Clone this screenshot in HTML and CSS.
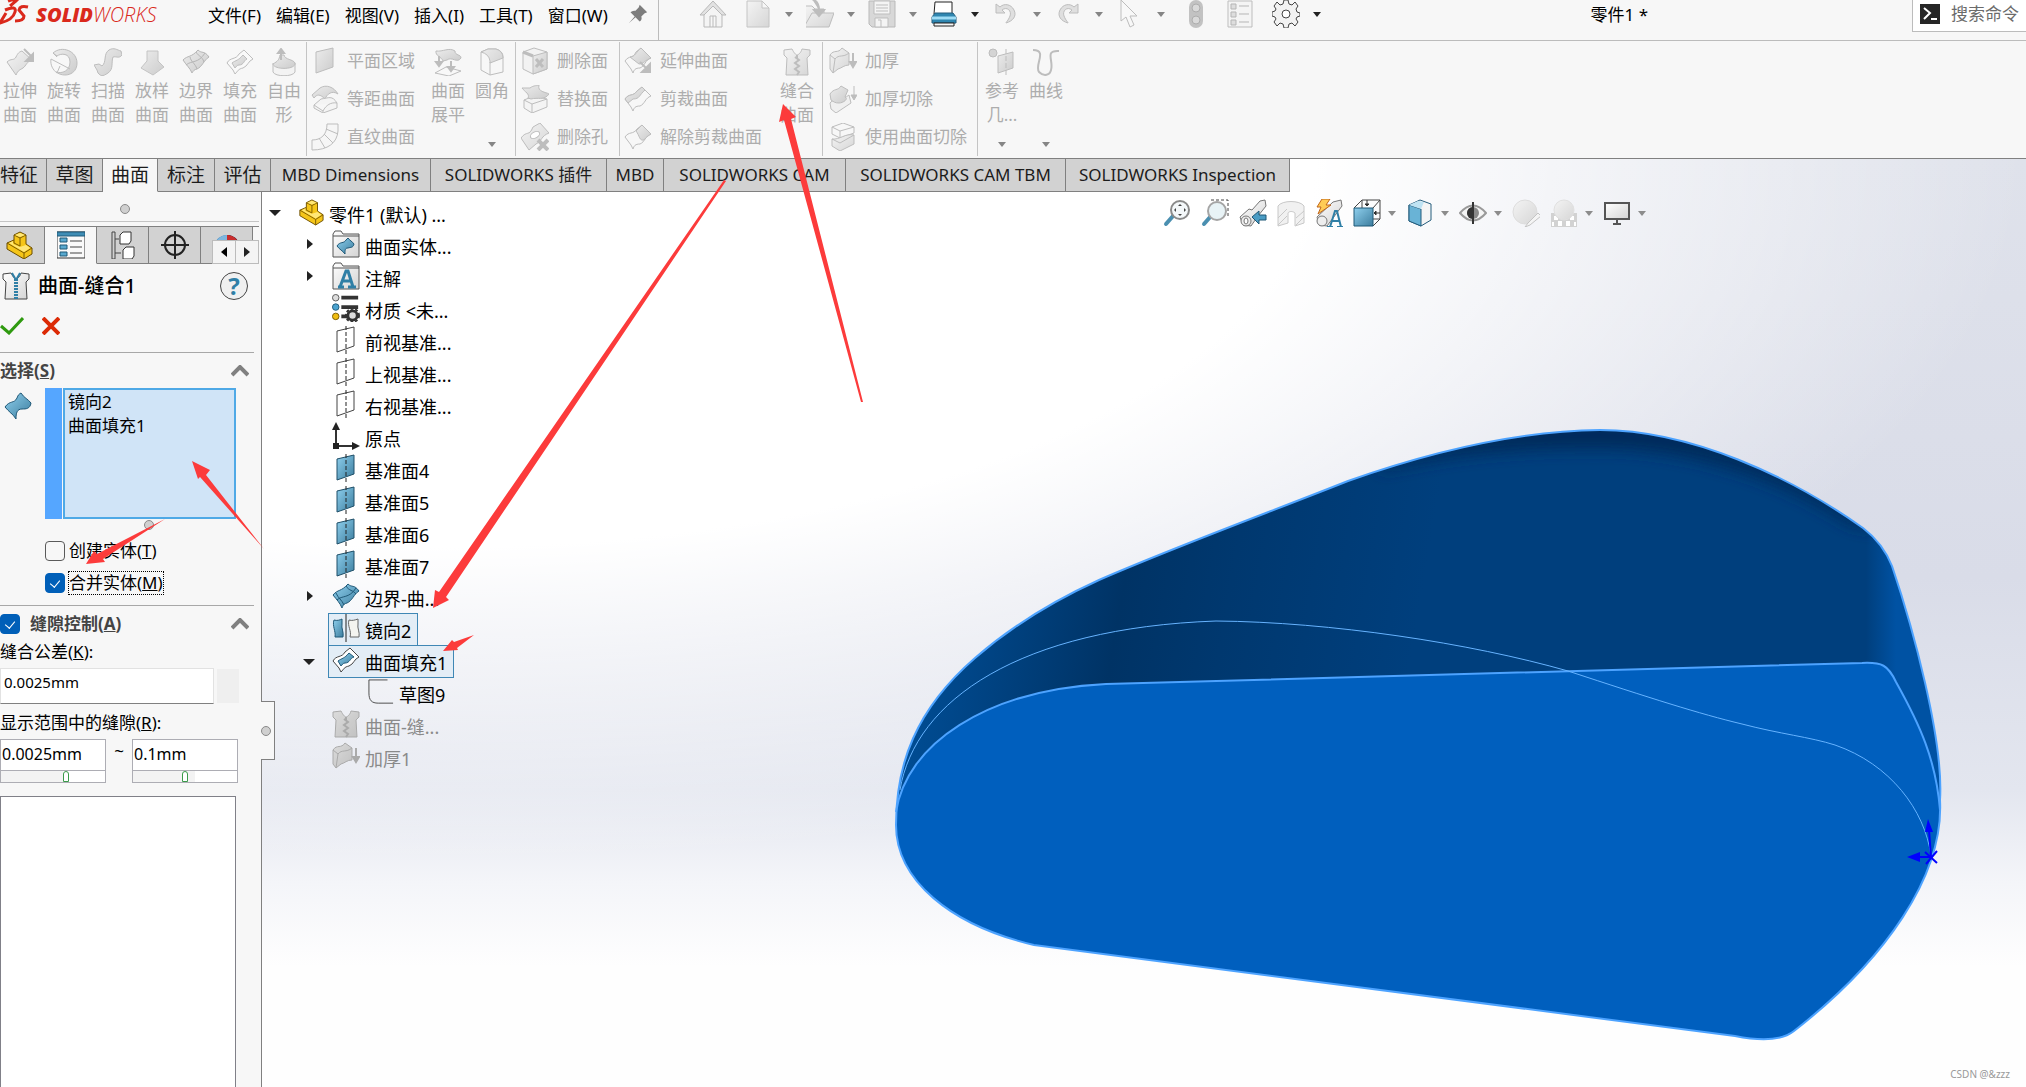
FILE: index.html
```html
<!DOCTYPE html>
<html lang="zh-CN">
<head>
<meta charset="utf-8">
<meta name="viewport" content="width=device-width, initial-scale=1">
<title>零件1 - SOLIDWORKS</title>
<link rel="stylesheet" href="styles.css">
</head>
<body>
<svg class="defs" aria-hidden="true">
  <defs>
    <linearGradient id="gg" x1="0" y1="0" x2="1" y2="1"><stop offset="0" stop-color="#f4f4f4"/><stop offset="1" stop-color="#d6d6d6"/></linearGradient>
    <linearGradient id="gd" x1="0" y1="0" x2="1" y2="1"><stop offset="0" stop-color="#ececec"/><stop offset="1" stop-color="#cccccc"/></linearGradient>
    <linearGradient id="gb" x1="0" y1="0" x2="1" y2="1"><stop offset="0" stop-color="#8fd0ee"/><stop offset="1" stop-color="#3c7d9e"/></linearGradient>
    <linearGradient id="gw" x1="0" y1="0" x2="1" y2="1"><stop offset="0" stop-color="#ffffff"/><stop offset="1" stop-color="#d4d4d4"/></linearGradient>

    <symbol id="extrude" viewBox="0 0 28 28"><path d="M1 14C5 10 8 13 10 9S13 4 16 3L26 12C21 13 20 18 17 20S12 22 10 27Z" fill="url(#gg)" stroke="#bdbdbd"/><path d="M18 1L25 8M28 5V13H20Z" stroke="#bdbdbd" stroke-width="2" fill="#bdbdbd"/></symbol>
    <symbol id="revolve" viewBox="0 0 28 28"><path d="M3 5C12-3 27 3 27 15S14 30 6 24C12 26 20 23 20 14S11 5 7 8Z" fill="url(#gd)" stroke="#bdbdbd"/><path d="M3 5L7 9M1 11L20 21M1 11C0 17 3 22 7 25L10 18" fill="none" stroke="#bdbdbd"/></symbol>
    <symbol id="sweep" viewBox="0 0 28 28"><path d="M0 17L5 16 8 18C13 14 9 6 15 2C20-1 23 2 27 3L28 7C25 11 22 8 19 9C17 14 20 21 14 25S7 28 4 25L3 22Z" fill="url(#gd)" stroke="#bdbdbd"/></symbol>
    <symbol id="loft" viewBox="0 0 28 28"><path d="M9 3H20L20 13 26 19 15 27 3 20 9 13Z" fill="url(#gd)" stroke="#c4c4c4"/></symbol>
    <symbol id="boundary" viewBox="0 0 28 28"><path d="M1 12C6 7 9 10 16 2C20 6 22 2 27 9C22 12 20 19 15 21C11 22 11 24 10 25C8 20 5 18 1 12Z" fill="url(#gd)" stroke="#b5b5b5"/><path d="M8 9C9 14 13 15 15 21M14 4C17 9 20 8 22 14M4 17C10 12 16 16 23 5" fill="none" stroke="#b5b5b5"/></symbol>
    <symbol id="fill" viewBox="0 0 28 28"><path d="M1 15C4 9 10 12 13 6L18 2 27 11C22 13 22 18 17 20C12 21 12 23 9 26L7 22Z" fill="#f9f9f9" stroke="#bdbdbd"/><path d="M6 15C10 12 12 13 17 7L21 11C18 12 18 17 13 17C11 17 10 19 9 20Z" fill="url(#gd)" stroke="#bdbdbd"/></symbol>
    <symbol id="freeform" viewBox="0 0 28 28"><path d="M3 15V24C5 29 23 29 25 24V15" fill="#f3f3f3" stroke="#bdbdbd"/><path d="M3 16C8 13 9 12 10 7H14C15 12 23 11 25 15C26 22 4 22 3 16Z" fill="url(#gd)" stroke="#bdbdbd"/><path d="M11 12V2M8 5L11 1 14 5Z" fill="#bdbdbd" stroke="#bdbdbd" stroke-width="2"/></symbol>
    <symbol id="planar" viewBox="0 0 28 28"><path d="M5 5L22 1V20L5 26Z" fill="url(#gd)" stroke="#bdbdbd"/></symbol>
    <symbol id="offset" viewBox="0 0 28 28"><path d="M1 10L9 3C15-1 23 2 27 9C21 5 16 9 14 14C9 9 6 9 3 13Z" fill="url(#gd)" stroke="#bdbdbd"/><path d="M3 20L10 14C18 13 21 10 26 18V23L12 28 3 23ZM3 20L12 26C15 20 20 17 26 18M12 26V28" fill="#f4f4f4" stroke="#bdbdbd"/></symbol>
    <symbol id="ruled" viewBox="0 0 28 28"><path d="M16 1H27V8C26 20 17 27 1 27V17C10 17 16 12 16 1ZM15 6L27 11M13 11L22 20M8 15L14 25" fill="#f6f6f6" stroke="#bdbdbd"/></symbol>
    <symbol id="flatten" viewBox="0 0 28 28"><path d="M2 3C9 4 15-1 21 3C21 8 27 6 27 10C23 16 18 8 13 12L9 13C8 9 1 8 2 3Z" fill="url(#gd)" stroke="#bdbdbd"/><path d="M1 25L12 19 27 23 15 28Z" fill="#f8f8f8" stroke="#bdbdbd"/><path d="M5 8V16M17 13V21M2 14H8L5 18ZM14 19H20L17 23Z" fill="#bdbdbd" stroke="#bdbdbd" stroke-width="2"/></symbol>
    <symbol id="fillet" viewBox="0 0 28 28"><path d="M3 4L10 1H18Q25 3 25 9V24L12 27 3 22Z" fill="#f7f7f7" stroke="#bdbdbd"/><path d="M3 4L10 1H18Q25 3 25 10L12 15V13Q11 6 3 4ZM12 14V27" fill="url(#gd)" stroke="#bdbdbd"/></symbol>
    <symbol id="delface" viewBox="0 0 28 28"><path d="M2 5L13 1 26 5V22L12 27 2 22Z" fill="#f2f2f2" stroke="#bdbdbd"/><path d="M12 9L26 5V22L12 27Z" fill="url(#gd)" stroke="#bdbdbd"/><path d="M2 5L12 9M15 12L22 20M22 12L15 20" stroke="#bdbdbd" stroke-width="3"/></symbol>
    <symbol id="replace" viewBox="0 0 28 28"><path d="M3 15L13 11 26 14V22L11 28 3 23ZM3 15L11 19V28M11 19L26 14" fill="#f4f4f4" stroke="#bdbdbd"/><path d="M1 3L9 3C13 0 16 1 18 0C16 7 25 7 28 9C23 16 17 12 10 14L7 13C9 9 4 7 1 3Z" fill="url(#gd)" stroke="#bdbdbd"/></symbol>
    <symbol id="delhole" viewBox="0 0 28 28"><path d="M0 15C6 7 8 14 12 4L19 0 28 10C20 13 21 18 15 21L8 27Z" fill="url(#gg)" stroke="#bdbdbd"/><ellipse cx="14" cy="12" rx="5" ry="3" fill="#fff" stroke="#bdbdbd" transform="rotate(-30 14 12)"/><path d="M17 17L27 27M27 17L17 27" stroke="#bdbdbd" stroke-width="4"/></symbol>
    <symbol id="extend" viewBox="0 0 28 28"><path d="M1 14C5 8 9 12 12 5L17 1 27 11C21 13 21 19 16 21C11 21 10 23 9 26L7 22Z" fill="#f7f7f7" stroke="#bdbdbd"/><path d="M6 10C11 10 12 5 17 1L27 11C21 13 20 17 15 17Z" fill="url(#gd)" stroke="#bdbdbd"/><path d="M16 15L23 22M26 17V25H18Z" fill="#bdbdbd" stroke="#bdbdbd" stroke-width="2"/></symbol>
    <symbol id="trim" viewBox="0 0 28 28"><path d="M1 14C5 8 9 12 13 6L18 2 27 11C21 13 21 19 16 21C11 21 10 23 9 26L7 22Z" fill="#f7f7f7" stroke="#bdbdbd"/><path d="M1 14C5 8 9 12 13 6L18 2 21 5C15 10 16 14 9 14L4 18Z" fill="url(#gd)" stroke="#bdbdbd"/></symbol>
    <symbol id="untrim" viewBox="0 0 28 28"><path d="M1 14C5 8 9 12 13 6L18 2 27 11C21 13 21 19 16 21C11 21 10 23 9 26L7 22Z" fill="#f7f7f7" stroke="#bdbdbd"/><path d="M12 8L18 2 27 11C24 13 22 14 20 17C15 18 16 13 12 8Z" fill="url(#gd)" stroke="#bdbdbd"/></symbol>
    <symbol id="knit" viewBox="0 0 28 28"><path d="M1 2L9 1C11 5 13 7 14 7S18 5 19 1L27 2V7L24 10 25 27H3L4 10 1 7Z" fill="url(#gg)" stroke="#bdbdbd"/><path d="M12 9L16 12 12 15 16 18 12 21 16 24 14 27M14 7V10" fill="none" stroke="#bdbdbd" stroke-width="2"/></symbol>
    <symbol id="thicken" viewBox="0 0 28 28"><path d="M1 8C5 2 9 7 13 1L20 6V18C15 18 13 21 9 22L4 26 1 22Z" fill="url(#gg)" stroke="#bdbdbd"/><path d="M1 8L6 12C10 7 14 11 20 6M6 12L4 26" fill="none" stroke="#bdbdbd"/><path d="M24 6V16M21 15H27L24 20Z" fill="#bdbdbd" stroke="#bdbdbd" stroke-width="2"/></symbol>
    <symbol id="thickcut" viewBox="0 0 28 28"><path d="M1 18C6 12 13 16 20 10L22 18 7 28 2 24Z" fill="#f0f0f0" stroke="#bdbdbd"/><path d="M1 9C5 3 9 6 12 1L19 5 16 12C20 14 14 18 10 18S5 17 2 15Z" fill="url(#gd)" stroke="#bdbdbd"/><path d="M25 1V12M22 10H28L25 15Z" fill="#bdbdbd" stroke="#bdbdbd"/></symbol>
    <symbol id="surfcut" viewBox="0 0 28 28"><path d="M3 4L14 0 25 4V10L11 15 3 11ZM3 4L11 8 25 4M11 8V15" fill="#f7f7f7" stroke="#bdbdbd"/><path d="M3 16C11 17 16 10 25 12V21L11 28 3 23Z" fill="url(#gg)" stroke="#bdbdbd"/><path d="M3 16L11 20 25 12" fill="none" stroke="#bdbdbd"/></symbol>
    <symbol id="refgeo" viewBox="0 0 28 28"><circle cx="5" cy="5" r="4" fill="#d4d4d4" stroke="#bdbdbd"/><path d="M10 8L25 4V20L10 25Z" fill="url(#gd)" stroke="#bdbdbd"/><path d="M18 1V28" stroke="#bdbdbd" stroke-dasharray="5 2"/></symbol>
    <symbol id="curves" viewBox="0 0 28 28"><path d="M1 2C16 2 2 17 7 24C12 29 18 27 19 22C22 13 12 2 27 3" fill="none" stroke="#bdbdbd" stroke-width="2"/></symbol>

    <symbol id="home" viewBox="0 0 28 28"><path d="M5 14V27H23V14L14 5ZM11 27V16H17V27M14 16V27" fill="#f4f4f4" stroke="#b9b9b9"/><path d="M1 15L14 1 27 15H23L14 6 5 15Z" fill="#e2e2e2" stroke="#b9b9b9"/></symbol>
    <symbol id="doc" viewBox="0 0 28 28"><path d="M3 1H18L25 8V27H3ZM18 1V8H25" fill="url(#gg)" stroke="#c4c4c4"/></symbol>
    <symbol id="open" viewBox="0 0 28 28"><path d="M-2 27V6H6L9 9H18V13H28L23 27ZM-2 27L6 13H18" fill="url(#gg)" stroke="#bdbdbd"/><path d="M6-1C12 1 13 5 13 10M8 10H18L13 16Z" fill="#bdbdbd" stroke="#bdbdbd" stroke-width="2"/></symbol>
    <symbol id="save" viewBox="0 0 28 28"><path d="M1 1H27V27H4L1 24Z" fill="#d8d8d8" stroke="#b9b9b9"/><path d="M6 1H22V14H6ZM7 18H20V27H7ZM10 20H13V27M8 5H20M8 8H20M8 11H20" fill="#f4f4f4" stroke="#bdbdbd"/></symbol>
    <symbol id="print" viewBox="0 0 28 28"><path d="M5 2H22V14H4Z" fill="#fff" stroke="#222"/><path d="M5 13H23L26 17V23H2V17Z" fill="#2f86b0" stroke="#245d7d"/><path d="M2 18H26" stroke="#9fdcf5" stroke-width="3"/><path d="M4 23H24V26H4Z" fill="#f6f6f6" stroke="#222"/></symbol>
    <symbol id="undo" viewBox="0 0 28 28"><path d="M4 4V13H13L10 10C15 6 20 11 18 16S14 22 14 23C21 21 25 16 22 10S12 3 8 7Z" fill="#dfdfdf" stroke="#bdbdbd"/></symbol>
    <symbol id="redo" viewBox="0 0 28 28"><path d="M24 4V13H15L18 10C13 6 8 11 10 16S14 22 14 23C7 21 3 16 6 10S16 3 20 7Z" fill="#dfdfdf" stroke="#bdbdbd"/></symbol>
    <symbol id="cursor" viewBox="0 0 28 28"><path d="M5 0V21L10 17 14 27 18 25 14 16H21Z" fill="#f8f8f8" stroke="#bdbdbd"/></symbol>
    <symbol id="lights" viewBox="0 0 28 28"><rect x="7" y="0" width="14" height="28" rx="7" fill="#c2c2c2"/><circle cx="14" cy="8" r="4" fill="#d9d9d9" stroke="#adadad"/><circle cx="14" cy="20" r="4" fill="#d9d9d9" stroke="#adadad"/></symbol>
    <symbol id="options" viewBox="0 0 28 28"><path d="M2 1H26V27H2Z" fill="#f4f4f4" stroke="#bdbdbd"/><path d="M5 4H10V9H5ZM5 12H10V17H5ZM5 20H10V25H5ZM13 6H23M13 14H23M13 22H23" fill="#ddd" stroke="#b5b5b5"/></symbol>
    <symbol id="gear" viewBox="0 0 28 28"><path d="M12 0H16L17 4 20 5 23 2 26 6 24 9 25 12 28 13V16L25 17 24 19 26 22 23 26 20 23 17 24 16 28H12L11 24 8 23 5 26 2 22 4 19 3 17 0 16V12L3 11 4 9 2 6 5 2 8 5 11 4Z" fill="#f2f2f2" stroke="#444"/><circle cx="14" cy="14" r="4" fill="#fff" stroke="#444"/></symbol>
    <symbol id="pin" viewBox="0 0 24 24"><path d="M14 1L23 10 20 11 16 15C17 18 16 20 14 21L9 16 1 23 8 15 3 10C5 8 7 8 9 8L13 4Z" fill="#7d7d7d"/></symbol>

    <symbol id="part" viewBox="0 0 28 28"><path d="M2 12L9 9V4L15 1 21 4V13L27 17V23L19 28 2 18Z" fill="#f5c518" stroke="#6b4d00"/><path d="M9 4L15 7 21 4M15 7V15L9 12V9M2 12L19 22V28M19 22L27 17" fill="none" stroke="#7a5a00"/><path d="M10 4L15 2 20 4 15 6ZM4 12L8 10V13L15 16 21 14 25 17 19 21Z" fill="#ffe777"/></symbol>
    <symbol id="proplist" viewBox="0 0 28 28"><rect x="0" y="1" width="28" height="26" fill="#fafafa" stroke="#333"/><path d="M0 1H28V5H0Z" fill="#3f8db5" stroke="#205a7a"/><path d="M3 7H10V11H3ZM3 14H10V18H3ZM3 21H10V25H3Z" fill="#58a9cf" stroke="#1f5877"/><path d="M13 10H25M13 16H25M13 22H25" stroke="#444"/></symbol>
    <symbol id="config" viewBox="0 0 28 28"><path d="M3 1V28M6 1V28M3 1H6M3 28H6M6 8H10M6 22H12" stroke="#444" fill="none"/><path d="M11 4L14 1H22V10L20 13H11ZM14 19L17 16H25V25L23 28H14Z" fill="#fff" stroke="#333"/></symbol>
    <symbol id="target" viewBox="0 0 28 28"><circle cx="14" cy="14" r="10" fill="none" stroke="#222" stroke-width="2"/><path d="M14 0V28M0 14H28" stroke="#222" stroke-width="2"/></symbol>
    <symbol id="ball" viewBox="0 0 28 28"><circle cx="14" cy="17" r="13" fill="#3f8dca"/><path d="M14 4A13 13 0 0 1 27 17H14Z" fill="#2a1416"/><path d="M14 4A13 13 0 0 1 24 9L14 17Z" fill="#c92d2d"/><path d="M3 11A13 13 0 0 1 14 4V17Z" fill="#7fb6dd"/></symbol>
    <symbol id="knitc" viewBox="0 0 28 28"><path d="M1 2L9 1C11 5 13 7 14 7S18 5 19 1L27 2V7L24 10 25 27H3L4 10 1 7Z" fill="url(#gw)" stroke="#444"/><path d="M14 7V27" stroke="#2f7fa6" stroke-width="4" stroke-dasharray="2 1"/><path d="M10 1C12 5 14 7 14 9M18 1C16 5 14 7 14 9" stroke="#2f7fa6" fill="none" stroke-width="2"/></symbol>
    <symbol id="surf" viewBox="0 0 28 28"><path d="M1 15C6 8 10 12 13 6C14 3 15 2 17 1C20 6 24 7 27 11C26 17 22 17 18 17C13 17 12 21 12 27C9 22 5 20 1 15Z" fill="url(#gb)" stroke="#1f5877"/></symbol>
    <symbol id="surffolder" viewBox="0 0 28 28"><path d="M1 27V4L3 1H9L11 4H27V27Z" fill="url(#gw)" stroke="#555"/><path d="M1 6H27" stroke="#555"/><path d="M5 16C8 11 12 14 14 10L16 8C18 11 20 11 22 14C21 18 19 17 16 18C13 18 13 20 13 24C10 20 8 20 5 16Z" fill="url(#gb)" stroke="#1f5877"/></symbol>
    <symbol id="notefolder" viewBox="0 0 28 28"><path d="M1 27V4L3 1H9L11 4H27V27Z" fill="url(#gw)" stroke="#555"/><path d="M1 6H27" stroke="#555"/><path d="M6 25H12M16 25H24M8 25L14 9H16L21 25M11 19H18" fill="none" stroke="#2f7fa6" stroke-width="3"/></symbol>
    <symbol id="material" viewBox="0 0 30 30"><path d="M10 4H28M10 14H28M10 24H20" stroke="#333" stroke-width="4"/><circle cx="4" cy="4" r="3.5" fill="#ddd" stroke="#555"/><circle cx="4" cy="14" r="3.5" fill="#4ba3d0" stroke="#1f5877"/><circle cx="4" cy="24" r="3.5" fill="#f0bd10" stroke="#7a5a00"/><circle cx="22" cy="23" r="5" fill="#ddd" stroke="#333" stroke-width="3"/><circle cx="22" cy="23" r="7" fill="none" stroke="#333" stroke-width="2" stroke-dasharray="3 2"/></symbol>
    <symbol id="plane" viewBox="0 0 28 28"><path d="M5 5L22 1V20L5 26Z" fill="#fff" stroke="#444"/><path d="M14 0V28" stroke="#222" stroke-dasharray="4 2"/></symbol>
    <symbol id="planeb" viewBox="0 0 28 28"><path d="M5 5L22 1V20L5 26Z" fill="url(#gb)" stroke="#1f4f68"/><path d="M14 0V28" stroke="#222" stroke-dasharray="4 2"/></symbol>
    <symbol id="origin" viewBox="0 0 28 28"><path d="M4 4V24H24" fill="none" stroke="#333" stroke-width="2"/><path d="M4 0L8 8H0ZM28 24L20 20V28ZM1 21H7V27H1Z" fill="#222"/></symbol>
    <symbol id="boundc" viewBox="0 0 28 28"><path d="M1 13C6 7 9 10 16 2C20 6 22 2 27 9C22 12 20 19 15 21C11 22 11 24 10 26C8 21 5 18 1 13Z" fill="url(#gb)" stroke="#1f5877"/><path d="M4 11C6 16 10 18 12 23M14 4C17 9 21 8 24 12M5 18C10 13 17 17 24 6" fill="none" stroke="#1f5877"/></symbol>
    <symbol id="mirror" viewBox="0 0 28 28"><path d="M2 6C5 7 8 6 10 5V10C9 14 12 18 11 23H3C4 17 0 12 2 6Z" fill="url(#gb)" stroke="#1f5877"/><path d="M17 6C20 7 23 6 26 5V10C25 14 28 18 27 23H18C20 17 15 12 17 6Z" fill="#f4f4f0" stroke="#666"/><path d="M14 0V28" stroke="#222"/></symbol>
    <symbol id="fillc" viewBox="0 0 28 28"><path d="M1 15C4 9 10 12 13 6L18 2 27 11C22 13 22 18 17 20C12 21 12 23 9 26L7 22Z" fill="#fff" stroke="#444"/><path d="M6 15C10 12 12 13 17 7L22 11C18 12 18 17 13 17C11 17 10 19 9 20Z" fill="url(#gb)" stroke="#1f5877"/></symbol>
    <symbol id="sketch" viewBox="0 0 28 28"><path d="M21 1H1V15C1 23 4 26 11 26H27" fill="none" stroke="#444"/></symbol>

    <symbol id="zoomfit" viewBox="0 0 28 28"><path d="M10 17L3 25" stroke="#4a8fb0" stroke-width="4" stroke-linecap="round"/><circle cx="17" cy="11" r="9" fill="#f4f8fa" stroke="#8a8a8a" stroke-width="2"/><path d="M17 5L19 7H15ZM17 17L15 15H19ZM11 11L13 9V13ZM23 11L21 13V9Z" fill="#444"/></symbol>
    <symbol id="zoomarea" viewBox="0 0 28 28"><path d="M10 1H27V17" fill="none" stroke="#444" stroke-dasharray="3 2"/><path d="M10 17L3 25" stroke="#4a8fb0" stroke-width="4" stroke-linecap="round"/><circle cx="16" cy="12" r="9" fill="#e8f3f6" stroke="#a5a5a5" stroke-width="2"/></symbol>
    <symbol id="prevview" viewBox="0 0 28 28"><path d="M1 18L10 10 13 11 21 2 26 1 27 7 19 17 12 27 4 26Z" fill="url(#gw)" stroke="#777"/><ellipse cx="7" cy="22" rx="5" ry="5" fill="#eee" stroke="#777"/><ellipse cx="7" cy="22" rx="2" ry="3" fill="#fff" stroke="#777"/><path d="M13 18L20 12V16H27V21H20V25Z" fill="#4a9cc4" stroke="#1f5877"/></symbol>
    <symbol id="section" viewBox="0 0 28 28"><path d="M1 7C5 1 23 1 27 7V24L18 27V14C16 12 12 12 11 14V24L1 27Z" fill="#f1f1f1" stroke="#c8c8c8"/><path d="M1 19L10 10M1 26L10 17M19 19L27 12M19 26L27 18" stroke="#c8c8c8"/></symbol>
    <symbol id="dynview" viewBox="0 0 28 28"><path d="M2 18L18 3 26 1 27 7 12 27 4 26Z" fill="url(#gw)" stroke="#777"/><ellipse cx="7" cy="22" rx="5" ry="5" fill="#eee" stroke="#777"/><path d="M7 0H15L11 6H16L3 15 6 8H2Z" fill="#ffcc55" stroke="#c0651a"/><path d="M12 28H18M22 28H29M15 28L20 12H22L26 28M17 22H24" fill="none" stroke="#2f7fa6" stroke-width="2"/></symbol>
    <symbol id="orient" viewBox="0 0 28 28"><path d="M1 9L9 1H27V20L20 27M9 1V9M20 9L27 1M20 20H27" fill="none" stroke="#444"/><path d="M1 9H20V27H1Z" fill="url(#gb)" stroke="#1f5877"/><path d="M14 1V6M12 5H16L14 7ZM27 14H23M23 12V16L21 14Z" fill="#333" stroke="#333"/></symbol>
    <symbol id="display" viewBox="0 0 28 28"><path d="M3 6L14 1 25 5V21L15 27 3 22Z" fill="#f5f5f5" stroke="#245d7d"/><path d="M3 6L15 10V27L3 22Z" fill="#69b3d6" stroke="#245d7d"/><path d="M3 6L12 2 18 3 15 10Z" fill="#bfe3f3"/></symbol>
    <symbol id="eye" viewBox="0 0 28 28"><path d="M1 14Q14-1 27 14Q14 29 1 14Z" fill="#f4f4f4" stroke="#999" stroke-width="2"/><circle cx="14" cy="14" r="6" fill="#888"/><path d="M14 8A6 6 0 0 0 14 20Z" fill="#333"/><path d="M14 3V25" stroke="#333" stroke-width="2"/></symbol>
    <symbol id="appear" viewBox="0 0 28 28"><circle cx="13" cy="13" r="12" fill="url(#gg)" stroke="#ddd"/><path d="M26 14L16 24 13 28 18 26 29 17Z" fill="#f4f4f4" stroke="#c4c4c4"/></symbol>
    <symbol id="scene" viewBox="0 0 28 28"><path d="M1 14H27V28H1Z" fill="#d2d2d2"/><path d="M4 17H8V21H4ZM20 17H24V21H20ZM8 22H12V27H8ZM16 22H20V27H16ZM2 23H4V27H2ZM24 23H26V27H24Z" fill="#fff"/><circle cx="14" cy="11" r="10" fill="url(#gg)" stroke="#e0e0e0"/></symbol>
    <symbol id="monitor" viewBox="0 0 28 28"><rect x="2" y="4" width="24" height="16" fill="url(#gw)" stroke="#555" stroke-width="2"/><path d="M14 21V25M10 25H18" stroke="#555" stroke-width="2"/></symbol>
  </defs>
</svg>

<header class="titlebar">
  <div class="brand">
    <svg class="brand-mark" viewBox="0 0 30 26" aria-hidden="true"><path d="M8 1Q13-1 17 0Q15 2 10 6M5 10Q17 5 15 12Q13 20 0 23L6 13M28 7Q20 5 19 10L24 16Q24 21 15 21" fill="none" stroke="#da291c" stroke-width="3"/></svg>
    <span class="brand-name"><b>SOLID</b>WORKS</span>
  </div>
  <nav class="menus">
    <a href="#">文件(F)</a><a href="#">编辑(E)</a><a href="#">视图(V)</a><a href="#">插入(I)</a><a href="#">工具(T)</a><a href="#">窗口(W)</a>
  </nav>
  <button class="pin" aria-label="固定"><svg class="pin-icon"><use href="#pin"/></svg></button>
  <div class="quick">
    <button class="tool wide home" aria-label="主页"><svg class="ic"><use href="#home"/></svg></button>
    <button class="tool" aria-label="新建"><svg class="ic"><use href="#doc"/></svg><i class="caret"></i></button>
    <button class="tool" aria-label="打开"><svg class="ic"><use href="#open"/></svg><i class="caret"></i></button>
    <button class="tool" aria-label="保存"><svg class="ic"><use href="#save"/></svg><i class="caret"></i></button>
    <button class="tool on" aria-label="打印"><svg class="ic"><use href="#print"/></svg><i class="caret"></i></button>
    <button class="tool" aria-label="撤销"><svg class="ic"><use href="#undo"/></svg><i class="caret"></i></button>
    <button class="tool" aria-label="重做"><svg class="ic"><use href="#redo"/></svg><i class="caret"></i></button>
    <button class="tool" aria-label="选择"><svg class="ic"><use href="#cursor"/></svg><i class="caret"></i></button>
    <button class="tool wide" aria-label="重建"><svg class="ic"><use href="#lights"/></svg></button>
    <button class="tool wide" aria-label="属性"><svg class="ic"><use href="#options"/></svg></button>
    <button class="tool on last" aria-label="选项"><svg class="ic"><use href="#gear"/></svg><i class="caret"></i></button>
  </div>
  <span class="doc-title">零件1 *</span>
  <label class="search">
    <svg class="search-icon" viewBox="0 0 20 20" aria-hidden="true"><rect width="20" height="20" fill="#262626"/><path d="M4 4L10 9 4 15M11 15H17" stroke="#fff" stroke-width="2" fill="none"/></svg>
    <input type="text" placeholder="搜索命令" aria-label="搜索命令">
  </label>
</header>

<section class="ribbon">
  <div class="group first">
    <button class="big"><svg class="ic"><use href="#extrude"/></svg><span>拉伸<br>曲面</span></button>
    <button class="big"><svg class="ic"><use href="#revolve"/></svg><span>旋转<br>曲面</span></button>
    <button class="big"><svg class="ic"><use href="#sweep"/></svg><span>扫描<br>曲面</span></button>
    <button class="big"><svg class="ic"><use href="#loft"/></svg><span>放样<br>曲面</span></button>
    <button class="big"><svg class="ic"><use href="#boundary"/></svg><span>边界<br>曲面</span></button>
    <button class="big"><svg class="ic"><use href="#fill"/></svg><span>填充<br>曲面</span></button>
    <button class="big"><svg class="ic"><use href="#freeform"/></svg><span>自由<br>形</span></button>
  </div>
  <div class="group g-plane">
    <div class="stack">
      <button class="small"><svg class="ic"><use href="#planar"/></svg>平面区域</button>
      <button class="small"><svg class="ic"><use href="#offset"/></svg>等距曲面</button>
      <button class="small"><svg class="ic"><use href="#ruled"/></svg>直纹曲面</button>
    </div>
    <button class="big"><svg class="ic"><use href="#flatten"/></svg><span>曲面<br>展平</span></button>
    <button class="big"><svg class="ic"><use href="#fillet"/></svg><span>圆角</span><i class="caret low"></i></button>
  </div>
  <div class="group g-delete">
    <div class="stack">
      <button class="small"><svg class="ic"><use href="#delface"/></svg>删除面</button>
      <button class="small"><svg class="ic"><use href="#replace"/></svg>替换面</button>
      <button class="small"><svg class="ic"><use href="#delhole"/></svg>删除孔</button>
    </div>
  </div>
  <div class="group g-trim">
    <div class="stack">
      <button class="small"><svg class="ic"><use href="#extend"/></svg>延伸曲面</button>
      <button class="small"><svg class="ic"><use href="#trim"/></svg>剪裁曲面</button>
      <button class="small"><svg class="ic"><use href="#untrim"/></svg>解除剪裁曲面</button>
    </div>
    <button class="big"><svg class="ic"><use href="#knit"/></svg><span>缝合<br>曲面</span></button>
  </div>
  <div class="group g-thick">
    <div class="stack">
      <button class="small"><svg class="ic"><use href="#thicken"/></svg>加厚</button>
      <button class="small"><svg class="ic"><use href="#thickcut"/></svg>加厚切除</button>
      <button class="small"><svg class="ic"><use href="#surfcut"/></svg>使用曲面切除</button>
    </div>
  </div>
  <div class="group g-ref">
    <button class="big"><svg class="ic"><use href="#refgeo"/></svg><span>参考<br>几...</span><i class="caret low"></i></button>
    <button class="big"><svg class="ic"><use href="#curves"/></svg><span>曲线</span><i class="caret low"></i></button>
  </div>
</section>

<main class="workspace">
  <svg class="model" viewBox="0 159 2026 928" preserveAspectRatio="xMaxYMin meet" aria-label="曲面模型">
    <defs>
      <linearGradient id="inner" gradientUnits="userSpaceOnUse" x1="900" y1="640" x2="1940" y2="820">
        <stop offset="0" stop-color="#004f98"/><stop offset=".06" stop-color="#00478a"/><stop offset=".2" stop-color="#003365"/><stop offset=".3" stop-color="#00386f"/><stop offset=".48" stop-color="#003f7d"/><stop offset="1" stop-color="#003f7d"/>
      </linearGradient>
      <linearGradient id="side" gradientUnits="userSpaceOnUse" x1="1866" y1="0" x2="1896" y2="0"><stop offset="0" stop-color="#0052a3" stop-opacity="0"/><stop offset="1" stop-color="#0052a3"/></linearGradient>
      <filter id="soft" x="-20%" y="-40%" width="140%" height="180%"><feGaussianBlur stdDeviation="8"/></filter>
      <path id="hull" d="M896 825C896 765 915 710 975 658C1012 626 1055 600 1099 580C1172 548 1270 512 1348 481C1430 452 1520 431 1600 430C1690 430 1790 476 1863 528C1880 541 1888 556 1892 566C1912 625 1944 740 1940 800C1944 876 1885 960 1794 1031C1784 1039 1765 1042 1735 1036L1034 945C950 925 896 880 896 825Z"/>
      <clipPath id="hullclip"><use href="#hull"/></clipPath>
    </defs>
    <g clip-path="url(#hullclip)">
      <use href="#hull" fill="url(#inner)"/>
      <path d="M1380 462C1480 430 1540 422 1600 422C1700 422 1800 470 1880 530L1850 524C1780 478 1690 448 1600 448C1540 448 1470 450 1380 470Z" fill="#002c5a" filter="url(#soft)"/>
      <path d="M1866 520H1950V820H1866Z" fill="url(#side)"/>
      <path d="M890 812H896C906 745 985 690 1106 684L1862 663C1882 662 1888 665 1896 682C1920 725 1936 760 1940 810V1060H890Z" fill="#005fbe"/>
    </g>
    <g fill="none" stroke="#4da3ff" stroke-width="2">
      <use href="#hull"/>
      <path d="M896 812C906 745 985 690 1106 684L1862 663C1882 662 1888 665 1896 682C1920 725 1936 760 1940 810"/>
      <path d="M900 790C915 700 1020 628 1216 621C1330 622 1470 643 1568 671C1650 698 1700 714 1742 724C1780 734 1810 737 1835 745C1890 764 1925 810 1931 856" stroke="#66b3ff" stroke-width="1"/>
    </g>
    <path d="M1931 857L1929 830M1931 857H1915M1925 852L1937 863M1937 851L1926 864" stroke="#0000ff" stroke-width="2"/>
    <path d="M1928 819L1933 832H1925ZM1907 857L1920 852V862Z" fill="#0000ff"/>
  </svg>

  <nav class="tabs">
    <a href="#" class="cn">特征</a><a href="#" class="cn">草图</a><a href="#" class="cn active">曲面</a><a href="#" class="cn">标注</a><a href="#" class="cn">评估</a><a href="#">MBD Dimensions</a><a href="#">SOLIDWORKS 插件</a><a href="#">MBD</a><a href="#">SOLIDWORKS CAM</a><a href="#">SOLIDWORKS CAM TBM</a><a href="#">SOLIDWORKS Inspection</a>
  </nav>

  <div class="split">
    <aside class="panel">
      <div class="grip"><i class="knob"></i></div>
      <div class="ptabs">
        <button aria-label="设计树"><svg class="ic"><use href="#part"/></svg></button>
        <button class="active" aria-label="属性"><svg class="ic"><use href="#proplist"/></svg></button>
        <button aria-label="配置"><svg class="ic"><use href="#config"/></svg></button>
        <button aria-label="尺寸专家"><svg class="ic"><use href="#target"/></svg></button>
        <button aria-label="外观"><svg class="ic"><use href="#ball"/></svg></button>
        <div class="scrollers"><button aria-label="向左"><i class="tri left"></i></button><button aria-label="向右"><i class="tri right"></i></button></div>
      </div>
      <div class="phead"><svg class="ic"><use href="#knitc"/></svg><h1>曲面-缝合1</h1><button class="help" aria-label="帮助">?</button></div>
      <div class="pactions">
        <button aria-label="确定"><svg viewBox="0 0 24 18" class="okx"><path d="M1 9L9 16 23 1" fill="none" stroke="#2f9a10" stroke-width="3"/></svg></button>
        <button aria-label="取消"><svg viewBox="0 0 18 18" class="okx cancel"><path d="M1 1L17 17M17 1L1 17" fill="none" stroke="#dc2a06" stroke-width="4"/></svg></button>
      </div>
      <section class="psec">
        <h2><span>选择(<u>S</u>)</span><svg class="chev" viewBox="0 0 18 12"><path d="M1 10L9 2 17 10" fill="none" stroke="#808080" stroke-width="4"/></svg></h2>
        <div class="pick"><svg class="ic"><use href="#surf"/></svg><i class="bar"></i><ul class="sel"><li>镜向2</li><li>曲面填充1</li></ul></div>
        <i class="knob mid"></i>
        <label class="check"><input type="checkbox"><span>创建实体(<u>T</u>)</span></label>
        <label class="check focus"><input type="checkbox" checked><span>合并实体(<u>M</u>)</span></label>
      </section>
      <section class="psec gap">
        <h2><label class="check head"><input type="checkbox" checked><span>缝隙控制(<u>A</u>)</span></label><svg class="chev" viewBox="0 0 18 12"><path d="M1 10L9 2 17 10" fill="none" stroke="#808080" stroke-width="4"/></svg></h2>
        <label class="flabel" for="tol">缝合公差(<u>K</u>):</label>
        <div class="tolrow"><input id="tol" type="text" value="0.0025mm"><i class="spin"></i></div>
        <label class="flabel" for="lo">显示范围中的缝隙(<u>R</u>):</label>
        <div class="range">
          <div class="rbox"><input id="lo" type="text" value="0.0025mm"><input type="range" value="63" aria-label="最小"></div>
          <span>~</span>
          <div class="rbox"><input type="text" value="0.1mm" aria-label="最大"><input type="range" value="50" aria-label="最大滑块"></div>
        </div>
      </section>
      <div class="results"></div>
      <div class="flyout"><i class="knob"></i></div>
    </aside>

    <div class="viewport">
      <ul class="tree">
        <li class="root"><i class="tri down"></i><svg class="ic"><use href="#part"/></svg><span>零件1 (默认) ...</span></li>
        <li><i class="tri right"></i><svg class="ic"><use href="#surffolder"/></svg><span>曲面实体...</span></li>
        <li><i class="tri right"></i><svg class="ic"><use href="#notefolder"/></svg><span>注解</span></li>
        <li><svg class="ic"><use href="#material"/></svg><span>材质 &lt;未...</span></li>
        <li><svg class="ic"><use href="#plane"/></svg><span>前视基准...</span></li>
        <li><svg class="ic"><use href="#plane"/></svg><span>上视基准...</span></li>
        <li><svg class="ic"><use href="#plane"/></svg><span>右视基准...</span></li>
        <li><svg class="ic"><use href="#origin"/></svg><span>原点</span></li>
        <li><svg class="ic"><use href="#planeb"/></svg><span>基准面4</span></li>
        <li><svg class="ic"><use href="#planeb"/></svg><span>基准面5</span></li>
        <li><svg class="ic"><use href="#planeb"/></svg><span>基准面6</span></li>
        <li><svg class="ic"><use href="#planeb"/></svg><span>基准面7</span></li>
        <li><i class="tri right"></i><svg class="ic"><use href="#boundc"/></svg><span>边界-曲...</span></li>
        <li class="picked"><svg class="ic"><use href="#mirror"/></svg><span>镜向2</span></li>
        <li class="picked"><i class="tri down"></i><svg class="ic"><use href="#fillc"/></svg><span>曲面填充1</span></li>
        <li class="child"><svg class="ic"><use href="#sketch"/></svg><span>草图9</span></li>
        <li class="dim"><svg class="ic"><use href="#knit"/></svg><span>曲面-缝...</span></li>
        <li class="dim"><svg class="ic"><use href="#thicken"/></svg><span>加厚1</span></li>
      </ul>
      <div class="hud">
        <button aria-label="整屏显示"><svg class="ic"><use href="#zoomfit"/></svg></button>
        <button aria-label="局部放大"><svg class="ic"><use href="#zoomarea"/></svg></button>
        <button aria-label="上一视图"><svg class="ic"><use href="#prevview"/></svg></button>
        <button aria-label="剖面视图"><svg class="ic"><use href="#section"/></svg></button>
        <button aria-label="动态注解"><svg class="ic"><use href="#dynview"/></svg></button>
        <button aria-label="视图定向"><svg class="ic"><use href="#orient"/></svg><i class="caret"></i></button>
        <button aria-label="显示样式"><svg class="ic"><use href="#display"/></svg><i class="caret"></i></button>
        <button aria-label="隐藏项目"><svg class="ic"><use href="#eye"/></svg><i class="caret"></i></button>
        <button aria-label="编辑外观"><svg class="ic"><use href="#appear"/></svg></button>
        <button aria-label="应用布景"><svg class="ic"><use href="#scene"/></svg><i class="caret"></i></button>
        <button aria-label="视图设定"><svg class="ic"><use href="#monitor"/></svg><i class="caret"></i></button>
      </div>
    </div>
  </div>
  <span class="credit">CSDN @&amp;zzz</span>
</main>

<svg class="arrows" viewBox="0 0 2026 1087" preserveAspectRatio="xMinYMin meet" aria-hidden="true">
  <g fill="#fc3b3b">
    <path d="M783 104L796 117 791 119 863 402 861 402 784 120 779 122Z"/>
    <path d="M433 608L435 590 439 592 724 180 726 181 446 597 449 600Z"/>
    <path d="M192 461L210 470 206 475 264 549 200 477 198 479Z"/>
    <path d="M86 564L94 551 97 554 165 519 103 559 105 562Z"/>
    <path d="M443 651L452 640 454 642 474 635 457 648 458 650Z"/>
  </g>
</svg>
</body>
</html>
```
FILE: styles.css
```css
* { box-sizing: border-box; }

body {
  margin: 0;
  height: 100vh;
  display: flex;
  flex-direction: column;
  overflow: hidden;
  position: relative;
  background: #f7f7f7;
  color: #000;
  font: 17px/24px "Noto Sans", "Noto Sans CJK SC", sans-serif;
}

button {
  margin: 0;
  padding: 0;
  border: 0;
  background: none;
  color: inherit;
  font: inherit;
}

a { color: inherit; text-decoration: none; }
ul { margin: 0; padding: 0; list-style: none; }
h1, h2 { margin: 0; }
input { font: inherit; }

.defs { position: absolute; width: 0; height: 0; }
.ic { width: 28px; height: 28px; flex: none; display: block; overflow: visible; }

.caret {
  flex: none;
  border: 4px solid transparent;
  border-top: 5px solid #858585;
  border-bottom: 0;
}

.tri { width: 0; height: 0; flex: none; }
.tri.left { border: 5px solid transparent; border-right: 6px solid #000; border-left: 0; }
.tri.right { border: 5px solid transparent; border-left: 6px solid #222; border-right: 0; }
.tri.down { border: 6px solid transparent; border-top: 6px solid #222; border-bottom: 0; }

.knob {
  display: block;
  width: 10px;
  height: 10px;
  border: 1px solid #8a8a8a;
  border-radius: 50%;
  background: #d0d0d0;
}

/* Title bar */
.titlebar {
  flex: none;
  display: flex;
  height: 41px;
  border-bottom: 1px solid #bcbcbc;
}
.brand { display: flex; width: 208px; color: #da291c; }
.brand-mark { width: 30px; height: 26px; margin-right: 6px; }
.brand-name { font: italic 300 20px/30px "Open Sans", "Noto Sans", sans-serif; }
.brand-name b { font-weight: 800; }
.menus { display: flex; gap: 15px; line-height: 32px; width: 420px; white-space: nowrap; }
.pin { width: 31px; padding: 4px 0; border-right: 1px solid #bcbcbc; display: flex; }
.pin-icon { width: 20px; height: 20px; }
.quick { display: flex; align-items: flex-start; padding-left: 31px; }
.tool { display: flex; align-items: center; height: 28px; width: 62px; padding-left: 2px; }
.tool .caret { margin-left: 13px; }
.tool.wide { width: 44px; padding-left: 6px; }
.tool.home { width: 46px; margin-right: 6px; padding-left: 9px; }
.tool.last { margin-left: 6px; }
.tool.on .caret { border-top-color: #222; }
.doc-title { margin-left: auto; margin-right: 264px; line-height: 30px; }
.search {
  display: flex;
  align-items: center;
  gap: 11px;
  width: 114px;
  height: 32px;
  padding-left: 7px;
  padding-bottom: 4px;
  background: #fff;
  border: 1px solid #bcbcbc;
  border-width: 0 0 1px 1px;
}
.search-icon { width: 20px; height: 20px; flex: none; }
.search input { width: 74px; padding: 0; border: 0; outline: 0; background: none; }
.search input::placeholder { color: #6b6b6b; opacity: 1; }

/* Ribbon */
.ribbon {
  flex: none;
  display: flex;
  height: 118px;
  padding: 1px 0 2px;
  border-bottom: 1px solid #808080;
  color: #adadad;
}
.group { display: flex; align-items: flex-start; border-right: 1px solid #c4c4c4; }
.group.first { width: 309px; margin-left: -2px; }
.big { display: flex; flex-direction: column; align-items: center; width: 44px; height: 114px; padding-top: 6px; }
.big span { margin-top: 3px; }
.big .low { margin-top: auto; margin-bottom: 9px; }
.stack { display: flex; flex-direction: column; }
.small { display: flex; align-items: center; gap: 8px; height: 38px; white-space: nowrap; }
.g-plane { width: 209px; padding-left: 4px; }
.g-plane .stack { width: 115px; }
.g-delete { width: 104px; padding-left: 5px; }
.g-trim { width: 203px; padding-left: 4px; }
.g-trim .stack { width: 151px; }
.g-thick { width: 155px; padding-left: 6px; }
.g-ref { border: 0; padding-left: 2px; }

/* Graphics area */
.workspace {
  flex: 1;
  min-height: 0;
  position: relative;
  display: flex;
  flex-direction: column;
  background:
    radial-gradient(ellipse 78% 76% at 22% 0, #fff 55%, rgba(255, 255, 255, 0) 100%),
    linear-gradient(#dfe2eb 0, #d9dce8 45%, #e3e6ef 68%, #f4f5f9 78%, #fefefe 87%);
}
.model { position: absolute; top: 0; right: 0; width: 100%; }

.tabs {
  position: relative;
  display: grid;
  grid-template-columns: 47px 56px 55px 57px 56px 160px 176px 57px 182px 220px 224px;
  width: max-content;
  height: 33px;
  font-size: 17px;
  line-height: 32px;
  text-align: center;
  white-space: nowrap;
  color: #1c1c1c;
}
.tabs a { background: #d2d2d2; border: 1px solid #808080; border-width: 0 1px 1px 0; }
.tabs .cn { font-size: 19px; }
.tabs a:first-child { text-align: left; }
.tabs .active { background: #f7f7f7; border-bottom-color: #f7f7f7; }

.split { flex: 1; min-height: 0; display: flex; position: relative; }

/* Property panel */
.panel {
  position: relative;
  flex: none;
  width: 262px;
  display: flex;
  flex-direction: column;
  background: #f7f7f7;
  border-right: 1px solid #808080;
}
.grip { height: 30px; padding: 12px 0 0 120px; border-bottom: 1px solid #c4c4c4; width: 259px; }
.ptabs { position: relative; display: flex; width: 259px; height: 38px; margin-top: 4px; overflow: hidden; border-top: 1px solid #808080; }
.ptabs > button { flex: none; width: 52px; display: flex; align-items: center; justify-content: center; background: #d2d2d2; border: 1px solid #808080; border-width: 0 1px 1px 0; }
.ptabs > button:first-child { width: 45px; padding-right: 6px; }
.ptabs > .active { background: #f7f7f7; border-bottom-color: #f7f7f7; }
.scrollers { position: absolute; right: 0; bottom: 0; display: flex; width: 47px; height: 24px; border: 1px solid #bcbcbc; background: #f4f4f4; }
.scrollers button { flex: 1; display: flex; align-items: center; justify-content: center; }
.scrollers button + button { border-left: 1px solid #bcbcbc; }
.phead { display: flex; align-items: center; gap: 8px; height: 44px; padding: 0 13px 0 2px; }
.phead h1 { flex: 1; font-size: 20px; font-weight: 500; }
.help { width: 28px; height: 28px; border: 1px solid #444; border-radius: 50%; color: #2f7fa6; background: #f0f0f0; font-size: 24px; line-height: 26px; font-weight: 700; }
.pactions { display: flex; align-items: center; gap: 18px; height: 45px; width: 254px; padding-bottom: 9px; border-bottom: 1px solid #a8a8a8; }
.okx { display: block; width: 24px; height: 18px; }
.cancel { width: 18px; }
.psec { width: 254px; padding-bottom: 6px; border-bottom: 1px solid #a8a8a8; }
.psec.gap { border: 0; padding: 0; }
.psec h2 { display: flex; align-items: center; justify-content: space-between; height: 35px; padding-right: 5px; font-size: 17px; font-weight: 700; color: #444; }
.chev { width: 18px; height: 12px; }
.pick { display: flex; height: 131px; }
.pick .ic { margin: 4px 13px 0 4px; }
.bar { width: 17px; background: #55a6ff; margin-right: 1px; }
.sel { width: 173px; padding: 0 3px; border: 2px solid #4fa9e6; background: #d0e4f7; }
.knob.mid { margin: 1px 0 0 144px; }
.check { display: flex; align-items: center; gap: 3px; padding-left: 45px; height: 32px; }
.knob.mid + .check { margin-top: 5px; }
.check span { line-height: 22px; border: 1px solid transparent; white-space: nowrap; }
.check.focus span { border: 1px dotted #000; }
.check.head { padding: 0; gap: 9px; }
.check input {
  appearance: none;
  flex: none;
  width: 20px;
  height: 20px;
  margin: 0;
  border: 1px solid #5a5a5a;
  border-radius: 4px;
  display: flex;
  justify-content: center;
  padding-top: 4px;
}
.check input:checked { background: #005fb8; border-color: #005fb8; }
.check input:checked::after { content: ""; width: 5px; height: 8px; border: 1px solid #fff; border-width: 0 1px 1px 0; transform: rotate(40deg); }
.flabel { display: block; height: 27px; line-height: 22px; }
.tolrow { display: flex; align-items: center; gap: 3px; height: 36px; margin-bottom: 8px; }
#tol { width: 214px; height: 36px; padding: 0 3px 8px; border: 1px solid #e2e2e2; border-bottom-color: #808080; background: #fff; font-size: 15px; }
.spin { width: 22px; height: 34px; background: #efefef; }
.range { display: flex; width: 238px; justify-content: space-between; }
.rbox { width: 106px; height: 44px; border: 1px solid #adadb4; background: #fff; display: flex; flex-direction: column; }
.rbox input[type="text"] { width: 100%; height: 31px; padding: 0 1px 2px; border: 0; border-bottom: 1px solid #adadb4; font-size: 16px; }
.rbox input[type="range"] { appearance: none; width: 100%; height: 11px; margin: 0; background: linear-gradient(90deg, #f3f3f3 60%, #fff 60%); }
.rbox input[type="range"]::-webkit-slider-thumb { appearance: none; width: 6px; height: 11px; border: 1px solid #3a9a4a; border-radius: 3px 3px 0 0; background: #fff; }
.results { flex: 1; width: 236px; margin-top: 13px; border: 1px solid #808088; border-bottom: 0; background: #fff; }
.flyout { position: absolute; left: 261px; top: 509px; width: 14px; height: 59px; display: flex; align-items: center; background: #f7f7f7; border: 1px solid #808080; border-left: 0; }

/* Feature tree and view toolbar */
.viewport { flex: 1; min-width: 0; display: flex; align-items: flex-start; }
.tree { position: relative; z-index: 0; flex: 0 0 521px; padding-top: 7px; font-size: 18px; line-height: 32px; white-space: nowrap; }
.tree li { position: relative; display: flex; align-items: center; height: 32px; padding-left: 70px; }
.tree .ic { margin-right: 5px; margin-bottom: 6px; }
.tree .root { padding-left: 7px; }
.root .ic { width: 26px; }
.root .tri { margin: 0 17px 5px 0; }
.tree li:not(.root) .tri { position: absolute; left: 45px; top: 8px; }
.tree li:not(.root) .tri.down { left: 41px; top: 12px; }
.tree .child { padding-left: 106px; }
.child .ic { width: 26px; }
.tree .dim { color: #8a8a8a; }
.dim .ic { filter: brightness(.9); }
.tree .picked::before { content: ""; position: absolute; z-index: -1; left: 66px; top: -2px; width: 88px; height: 31px; border: 1px solid #3f87b5; background: #e3edf6; }
.tree .picked + .picked::before { width: 124px; }
.hud { flex: 1; display: flex; justify-content: center; gap: 10px; padding-top: 7px; }
.hud button { display: flex; align-items: center; gap: 7px; }
.hud .caret { border-top-color: #8c8c8c; }

.credit { position: absolute; right: 16px; bottom: 4px; font: 10px/18px "Noto Sans", sans-serif; color: #999; }
.arrows { position: absolute; left: 0; top: 0; width: 100%; pointer-events: none; }
```
